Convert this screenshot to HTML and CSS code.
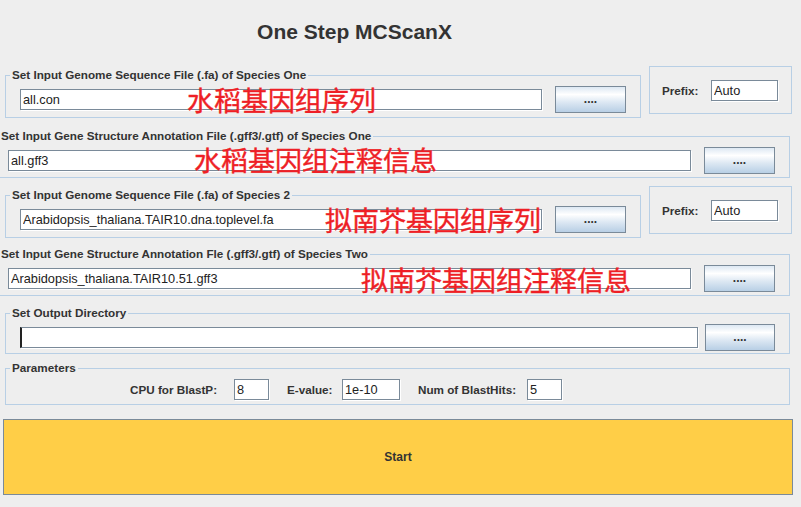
FILE: index.html
```html
<!DOCTYPE html>
<html>
<head>
<meta charset="utf-8">
<link rel="stylesheet" href="styles.css">
</head>
<body>
<div class="app">
  <h1 class="title">One Step MCScanX</h1>

  <div class="row row-a first">
    <div class="panel seq">
      <span class="ptitle">Set Input Genome Sequence File (.fa) of Species One</span>
      <input class="field f-seq" type="text" value="all.con">
      <button class="btn btn-a">....</button>
    </div>
    <div class="panel prefix">
      <label class="plabel">Prefix:</label>
      <input class="field f-prefix" type="text" value="Auto">
    </div>
  </div>

  <div class="panel gff gff-1">
    <span class="ptitle">Set Input Gene Structure Annotation File (.gff3/.gtf) of Species One</span>
    <input class="field f-gff" type="text" value="all.gff3">
    <button class="btn btn-a">....</button>
  </div>

  <div class="row row-a second">
    <div class="panel seq">
      <span class="ptitle">Set Input Genome Sequence File (.fa) of Species 2</span>
      <input class="field f-seq" type="text" value="Arabidopsis_thaliana.TAIR10.dna.toplevel.fa">
      <button class="btn btn-a">....</button>
    </div>
    <div class="panel prefix">
      <label class="plabel">Prefix:</label>
      <input class="field f-prefix" type="text" value="Auto">
    </div>
  </div>

  <div class="panel gff gff-2">
    <span class="ptitle">Set Input Gene Structure Annotation Fle (.gff3/.gtf) of Species Two</span>
    <input class="field f-gff" type="text" value="Arabidopsis_thaliana.TAIR10.51.gff3">
    <button class="btn btn-a">....</button>
  </div>

  <div class="panel out">
    <span class="ptitle">Set Output Directory</span>
    <input class="field f-out caret" type="text" value="">
    <button class="btn btn-b">....</button>
  </div>

  <div class="panel params">
    <span class="ptitle">Parameters</span>
    <label class="qlabel q1">CPU for BlastP:</label>
    <input class="field f-small" type="text" value="8">
    <label class="qlabel q2">E-value:</label>
    <input class="field f-eval" type="text" value="1e-10">
    <label class="qlabel q3">Num of BlastHits:</label>
    <input class="field f-small" type="text" value="5">
  </div>

  <button class="start">Start</button>

  <span class="note n1">水稻基因组序列</span>
  <span class="note n2">水稻基因组注释信息</span>
  <span class="note n3">拟南芥基因组序列</span>
  <span class="note n4">拟南芥基因组注释信息</span>
</div>
</body>
</html>
```

FILE: styles.css
```css
html, body {
  margin: 0;
  padding: 0;
  background: #eeeeee;
}
body {
  width: 801px;
  height: 507px;
  overflow: hidden;
  font-family: "Liberation Sans", Arial, sans-serif;
  color: #333333;
}
.app {
  position: relative;
  width: 801px;
  height: 507px;
  overflow: hidden;
}
.title {
  margin: 20px 0 0 0;
  height: 24px;
  line-height: 24px;
  font-size: 21px;
  font-weight: bold;
  text-align: center;
  padding-right: 92px;
  color: #333333;
}
.row {
  display: flex;
  align-items: flex-start;
}
.row.first { margin-top: 22px; }
.row.second { margin-top: 8px; }

.panel {
  position: relative;
  box-sizing: border-box;
  border: 1px solid #b8cfe5;
  display: flex;
  align-items: flex-start;
}
.ptitle {
  position: absolute;
  left: 4px;
  top: -8px;
  padding: 0 2px;
  background: #eeeeee;
  font-size: 11.7px;
  line-height: 14px;
  font-weight: bold;
  color: #333333;
  white-space: nowrap;
}
.field {
  box-sizing: border-box;
  height: 21px;
  margin: 3px 0 0 0;
  padding: 0 2px;
  border: 1px solid #7a8a99;
  box-shadow: 1px 1px 0 #ffffff;
  background: #ffffff;
  font-family: "Liberation Sans", Arial, sans-serif;
  font-size: 12.75px;
  color: #222222;
  outline: none;
}
.btn {
  box-sizing: border-box;
  height: 27px;
  margin: 0;
  padding: 0;
  border: 1px solid #7a8a99;
  background: linear-gradient(#dde8f3 0%, #ffffff 30%, #dde8f3 60%, #b8cfe5 100%);
  font-family: "Liberation Sans", Arial, sans-serif;
  font-size: 12px;
  font-weight: bold;
  color: #333333;
  line-height: 25px;
}

/* sequence panels */
.seq {
  margin-left: 5px;
  margin-top: 9px;
  width: 636px;
  height: 43px;
  padding: 10px 0 0 14px;
}
.f-seq { width: 522px; }
.btn-a { width: 71px; margin-left: 13px; }

.prefix {
  margin-left: 8px;
  width: 143px;
  height: 48px;
  padding-left: 12px;
  align-items: center;
}
.plabel {
  width: 49px;
  font-size: 11.7px;
  font-weight: bold;
  line-height: 21px;
}
.f-prefix { width: 67px; margin-top: 0; }

/* gff panels */
.gff {
  margin-left: -6px;
  width: 796px;
  height: 42px;
  padding: 10px 0 0 13px;
}
.gff-1 { margin-top: 18px; }
.gff-2 { margin-top: 16px; }
.f-gff { width: 683px; }

/* output */
.out {
  margin-top: 17px;
  margin-left: 5px;
  width: 785px;
  height: 41px;
  padding: 10px 0 0 14px;
}
.f-out { width: 678px; border-left: 2px solid #222; }
.btn-b { width: 70px; margin-left: 7px; }

/* params */
.params {
  margin-top: 14px;
  margin-left: 5px;
  width: 785px;
  height: 37px;
  padding: 10px 0 0 124px;
}
.params .field { margin-top: 0; }
.qlabel {
  font-size: 11.7px;
  font-weight: bold;
  line-height: 21px;
  white-space: nowrap;
}
.q1 { width: 104px; }
.q2 { width: 55px; margin-left: 18px; }
.q3 { width: 109px; margin-left: 18px; }
.f-small { width: 35px; }
.f-eval { width: 58px; }

.start {
  display: block;
  box-sizing: border-box;
  margin: 14px 0 0 3px;
  width: 790px;
  height: 76px;
  padding: 0;
  border: 1px solid #7a8a99;
  background: #ffce47;
  font-family: "Liberation Sans", Arial, sans-serif;
  font-size: 12px;
  font-weight: bold;
  color: #333333;
}

/* red annotations drawn over the form */
.note {
  position: absolute;
  font-family: "Noto Sans CJK SC", sans-serif;
  font-size: 27px;
  line-height: 27px;
  color: #ee1f26;
  -webkit-text-stroke: 0.4px #ee1f26;
  white-space: nowrap;
}
.n1 { left: 187px; top: 86px; }
.n2 { left: 194px; top: 146px; }
.n3 { left: 325px; top: 206px; }
.n4 { left: 361px; top: 266px; }
```
